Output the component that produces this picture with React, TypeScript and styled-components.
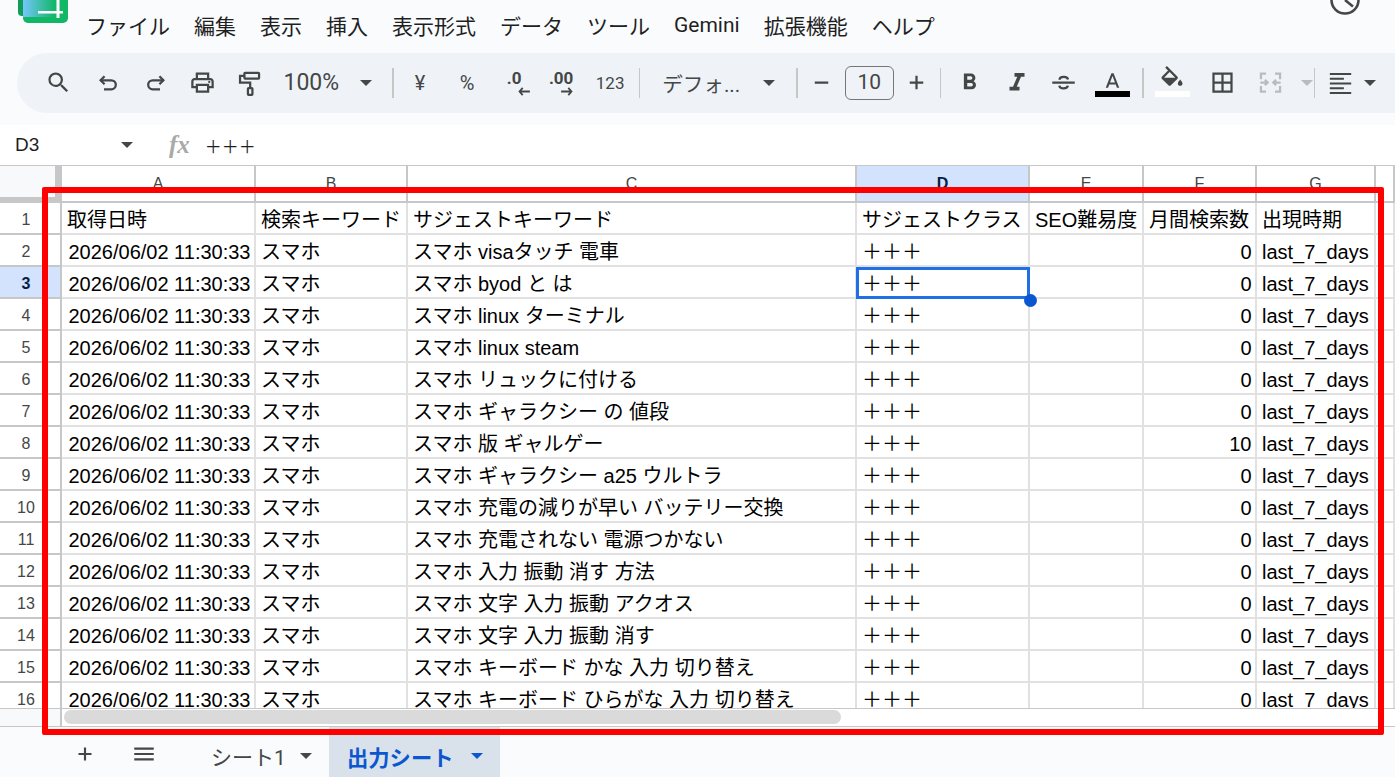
import * as React from 'react'
import styled, { createGlobalStyle } from 'styled-components'

const UI_FONT = '"Roboto", "Noto Sans CJK JP", sans-serif'
const CELL_FONT = '"Liberation Sans", "Noto Sans CJK JP", sans-serif'
const COLUMNS = '62px 194px 152px 449px 173px 114px 113px 119px 1fr'

const DATE = '2026/06/02 11:30:33'
const KEYWORDS: [string, string][] = [
  ['スマホ visaタッチ 電車', '0'],
  ['スマホ byod と は', '0'],
  ['スマホ linux ターミナル', '0'],
  ['スマホ linux steam', '0'],
  ['スマホ リュックに付ける', '0'],
  ['スマホ ギャラクシー の 値段', '0'],
  ['スマホ 版 ギャルゲー', '10'],
  ['スマホ ギャラクシー a25 ウルトラ', '0'],
  ['スマホ 充電の減りが早い バッテリー交換', '0'],
  ['スマホ 充電されない 電源つかない', '0'],
  ['スマホ 入力 振動 消す 方法', '0'],
  ['スマホ 文字 入力 振動 アクオス', '0'],
  ['スマホ 文字 入力 振動 消す', '0'],
  ['スマホ キーボード かな 入力 切り替え', '0'],
  ['スマホ キーボード ひらがな 入力 切り替え', '0']
]
const MENU = ['ファイル', '編集', '表示', '挿入', '表示形式', 'データ', 'ツール', 'Gemini', '拡張機能', 'ヘルプ']
const HEADERS = ['取得日時', '検索キーワード', 'サジェストキーワード', 'サジェストクラス', 'SEO難易度', '月間検索数', '出現時期']

const Icon = ({ d, size = 27, children }: { d?: string; size?: number; children?: React.ReactNode }) => (
  <svg width={size} height={size} viewBox="0 0 24 24" fill="currentColor">
    {d && <path d={d} />}
    {children}
  </svg>
)

const Stroke = styled.g`
  fill: none;
  stroke: currentColor;
  stroke-width: 2;
`

export default function App() {
  return (
    <Page>
      <GlobalStyle />
      <TopBar>
        <svg width="50" height="23" viewBox="0 0 50 23">
          <defs>
            <linearGradient id="logo" x1="0" x2="1" y1="0" y2="0">
              <stop offset="0" stopColor="#74c6fb" />
              <stop offset="0.7" stopColor="#12b76a" />
              <stop offset="1" stopColor="#0fb862" />
            </linearGradient>
          </defs>
          <path d="M0 0h6v16H4a4 4 0 0 1-4-4z" fill="#0f9d58" />
          <path d="M5 0h45v18a5 5 0 0 1-5 5H10a5 5 0 0 1-5-5z" fill="#10b765" />
          <path d="M5 0h45v17H5z" fill="url(#logo)" />
          <path d="M20 11h25v2.500H20zM38.500 0h3v18h-3z" fill="#fff" />
        </svg>
        <Menu>
          {MENU.map(m => (
            <MenuItem key={m}>{m}</MenuItem>
          ))}
        </Menu>
        <HistoryIcon width="32" height="15" viewBox="0 0 32 15">
          <circle cx="16" cy="0" r="13.5" fill="none" stroke="#444746" strokeWidth="2.6" />
          <path d="M16 0l8 6.5" fill="none" stroke="#444746" strokeWidth="2.6" />
        </HistoryIcon>
      </TopBar>

      <Toolbar>
        <ToolButton $mr={3}>
          <Icon d="M15.5 14h-.79l-.28-.27A6.471 6.471 0 0 0 16 9.5 6.5 6.5 0 1 0 9.5 16c1.61 0 3.09-.59 4.23-1.57l.27.28v.79l5 4.99L20.49 19l-4.99-5zm-6 0C7.01 14 5 11.99 5 9.5S7.01 5 9.5 5 14 7.01 14 9.5 11.99 14 9.5 14z" />
        </ToolButton>
        <ToolButton>
          <Icon>
            <Stroke>
              <path d="M8.5 6.5L5 10l3.5 3.5" />
              <path d="M5 10h9.5a4 4 0 0 1 0 8H8" />
            </Stroke>
          </Icon>
        </ToolButton>
        <ToolButton>
          <Icon>
            <Stroke>
              <path d="M15.5 6.5L19 10l-3.500 3.500" />
              <path d="M19 10H9.500a4 4 0 0 0 0 8H16" />
            </Stroke>
          </Icon>
        </ToolButton>
        <ToolButton>
          <Icon d="M19 8h-1V3H6v5H5c-1.66 0-3 1.34-3 3v6h4v4h12v-4h4v-6c0-1.66-1.34-3-3-3zM8 5h8v3H8V5zm8 12v2H8v-4h8v2zm2-2v-2H6v2H4v-4c0-.55.45-1 1-1h14c.55 0 1 .45 1 1v4h-2z">
            <circle cx="18" cy="11.5" r="1" />
          </Icon>
        </ToolButton>
        <ToolButton>
          <Icon>
            <Stroke>
              <rect x="7.5" y="3.5" width="13" height="5" rx="0.6" />
              <path d="M7.5 6H3.6v6.200h9v5" />
              <rect x="10.6" y="17" width="4" height="6" rx="0.6" />
            </Stroke>
          </Icon>
        </ToolButton>
        <ZoomLabel>100%</ZoomLabel>
        <Caret $ml={21} />
        <Divider $ml={20} $mr={3} />
        <ToolButton>
          <SymbolText>¥</SymbolText>
        </ToolButton>
        <ToolButton>
          <SymbolText>%</SymbolText>
        </ToolButton>
        <ToolButton>
          <DecimalIcon>
            <DecimalText>.0</DecimalText>
            <DecimalArrow $mr={-10} width="13" height="9" viewBox="0 0 14 10" fill="none" stroke="currentColor" strokeWidth="2">
              <path d="M5 1L1.500 5 5 9M2 5h11" />
            </DecimalArrow>
          </DecimalIcon>
        </ToolButton>
        <ToolButton>
          <DecimalIcon>
            <DecimalText>.00</DecimalText>
            <DecimalArrow $mr={0} width="13" height="9" viewBox="0 0 14 10" fill="none" stroke="currentColor" strokeWidth="2">
              <path d="M9 1l3.500 4L9 9M12 5H1" />
            </DecimalArrow>
          </DecimalIcon>
        </ToolButton>
        <ToolButton>
          <NumberText>123</NumberText>
        </ToolButton>
        <Divider $ml={7} $mr={22} />
        <FontLabel>デフォ...</FontLabel>
        <Caret $ml={23} />
        <Divider $ml={21} />
        <ToolButton>
          <Icon d="M6 11h12v2H6z" />
        </ToolButton>
        <SizeBox>10</SizeBox>
        <ToolButton $w={46}>
          <Icon d="M11 6h2v5h5v2h-5v5h-2v-5H6v-2h5z" />
        </ToolButton>
        <Divider $mr={5} />
        <ToolButton>
          <Icon d="M15.6 10.79c.97-.67 1.65-1.77 1.65-2.79 0-2.26-1.75-4-4-4H7v14h7.04c2.09 0 3.71-1.7 3.71-3.79 0-1.52-.86-2.82-2.15-3.42zM10 6.5h3c.83 0 1.5.67 1.5 1.5s-.67 1.5-1.5 1.5h-3v-3zm3.5 9H10v-3h3.5c.83 0 1.5.67 1.5 1.5s-.67 1.5-1.5 1.5z" />
        </ToolButton>
        <ToolButton>
          <Icon size={30} d="M10 4v3h2.21l-3.42 8H6v3h8v-3h-2.21l3.42-8H18V4z" />
        </ToolButton>
        <ToolButton>
          <Icon>
            <path d="M2 11h20v2H2z" />
            <Stroke>
              <path d="M8.500 9.500C8.500 6.500 15.500 6 16 9.300" />
              <path d="M8.300 14.800C8.800 18.300 15.500 18 15.800 14.800" />
            </Stroke>
          </Icon>
        </ToolButton>
        <ColorButton $pt={7} $ml={2}>
          <Icon size={25} d="M11 3L5.5 17h2.25l1.12-3h6.25l1.12 3h2.25L13 3h-2zm-1.38 9L12 5.67 14.38 12H9.62z" />
          <ColorBar $bar="#000000" $mt={-3.5} />
        </ColorButton>
        <Divider $ml={6} $mr={5} />
        <ColorButton $pt={3.5}>
          <Icon size={28} d="M16.56 8.94L7.62 0 6.21 1.41l2.38 2.38-5.15 5.15c-.59.59-.59 1.54 0 2.12l5.5 5.5c.29.29.68.44 1.06.44s.77-.15 1.06-.44l5.5-5.5c.59-.58.59-1.53 0-2.12zM5.21 10L10 5.21 14.79 10H5.21zM19 11.5s-2 2.17-2 3.5c0 1.1.9 2 2 2s2-.9 2-2c0-1.33-2-3.5-2-3.5z" />
          <ColorBar $bar="#ffffff" $mt={-3} />
        </ColorButton>
        <ToolButton $w={54}>
          <Icon d="M3 3v18h18V3H3zm8 16H5v-6h6v6zm0-8H5V5h6v6zm8 8h-6v-6h6v6zm0-8h-6V5h6v6z" />
        </ToolButton>
        <ToolButton $w={42} $disabled>
          <Icon>
            <Stroke>
              <path d="M8 4H3.500v5M3.500 15v5H8M16 4h4.500v5M20.500 15v5H16" />
              <path d="M3 12h6M7 9.500L9.500 12 7 14.500M21 12h-6M17 9.500L14.500 12l2.500 2.500" />
            </Stroke>
          </Icon>
        </ToolButton>
        <Caret $ml={9} $disabled />
        <Divider $ml={1} />
        <ToolButton $w={50}>
          <Icon d="M2.500 3.500h19v1.800h-19zM2.500 7.700H15v1.800H2.500zM2.500 12h19v1.800h-19zM2.500 16.200H15V18H2.500zM2.500 20.500h19v1.800h-19z" />
        </ToolButton>
        <Caret $ml={-1} />
      </Toolbar>

      <FormulaBar>
        <NameBox>D3</NameBox>
        <Caret $ml={0} />
        <FxLabel>fx</FxLabel>
        <FormulaText>＋＋＋</FormulaText>
      </FormulaBar>

      <ColumnHeaderRow>
        <Corner />
        {['A', 'B', 'C', 'D', 'E', 'F', 'G'].map(c => (
          <ColumnHead key={c} $active={c === 'D'}>
            {c}
          </ColumnHead>
        ))}
        <ColumnHead />
      </ColumnHeaderRow>

      <SheetBody>
        <SheetRow>
          <RowHead>1</RowHead>
          <Cell>{HEADERS[0]}</Cell>
          <Cell>{HEADERS[1]}</Cell>
          <Cell>{HEADERS[2]}</Cell>
          <Cell>{HEADERS[3]}</Cell>
          <Cell>{HEADERS[4]}</Cell>
          <Cell>{HEADERS[5]}</Cell>
          <Cell>{HEADERS[6]}</Cell>
          <Cell />
        </SheetRow>
        {KEYWORDS.map(([keyword, volume], i) => {
          const rowNo = i + 2
          const active = rowNo === 3
          return (
            <SheetRow key={rowNo}>
              <RowHead $active={active}>{rowNo}</RowHead>
              <Cell $right>{DATE}</Cell>
              <Cell>スマホ</Cell>
              <Cell>{keyword}</Cell>
              <Cell $selected={active}>
                ＋＋＋
                {active && (
                  <Selection>
                    <FillHandle />
                  </Selection>
                )}
              </Cell>
              <Cell />
              <Cell $right>{volume}</Cell>
              <Cell>last_7_days</Cell>
              <Cell />
            </SheetRow>
          )
        })}
      </SheetBody>

      <ScrollRow>
        <ScrollCorner />
        <ScrollTrack>
          <ScrollThumb />
        </ScrollTrack>
      </ScrollRow>

      <TabBar>
        <TabIcon $ml={61}>
          <Icon d="M11 6h2v5h5v2h-5v5h-2v-5H6v-2h5z" size={26} />
        </TabIcon>
        <TabIcon $ml={11}>
          <Icon d="M3 6h18v2H3zM3 11h18v2H3zM3 16h18v2H3z" size={26} />
        </TabIcon>
        <SheetTab>
          シート1
          <Caret $ml={14} />
        </SheetTab>
        <ActiveSheetTab>
          出力シート
          <TabCaret />
        </ActiveSheetTab>
      </TabBar>

      <RedFrame />
    </Page>
  )
}

const GlobalStyle = createGlobalStyle`
  html, body {
    margin: 0;
    padding: 0;
    background: #f9fbfd;
    overflow: hidden;
  }
  * {
    box-sizing: border-box;
  }
`

const Page = styled.div`
  position: relative;
  display: flex;
  flex-direction: column;
  width: 1395px;
  height: 777px;
  overflow: hidden;
  background: #f9fbfd;
  font-family: ${UI_FONT};
`

const TopBar = styled.header`
  display: flex;
  flex: none;
  align-items: flex-start;
  height: 53px;
  padding-left: 18px;
  color: #1f1f1f;
`

const Menu = styled.nav`
  display: flex;
  gap: 24px;
  height: 49px;
  margin-left: 18px;
  align-items: center;
`

const MenuItem = styled.span`
  font-size: 21px;
  white-space: nowrap;
`

const HistoryIcon = styled.svg`
  margin-left: auto;
  margin-right: 34px;
`

const Toolbar = styled.div`
  display: flex;
  flex: none;
  align-items: center;
  height: 60px;
  margin-left: 17px;
  padding-left: 17.5px;
  padding-bottom: 1px;
  background: #eff3f8;
  border-radius: 30px 0 0 30px;
  color: #444746;
  overflow: hidden;
`

const ToolButton = styled.div<{ $w?: number; $mr?: number; $disabled?: boolean }>`
  display: flex;
  flex: none;
  align-items: center;
  justify-content: center;
  width: ${p => p.$w ?? 47}px;
  margin-right: ${p => p.$mr ?? 0}px;
  color: ${p => (p.$disabled ? '#b9bcbf' : 'inherit')};
`

const ColorButton = styled(ToolButton)<{ $pt: number; $ml?: number }>`
  flex-direction: column;
  justify-content: flex-start;
  height: 40px;
  margin-left: ${p => p.$ml ?? 0}px;
  padding-top: ${p => p.$pt}px;
`

const ColorBar = styled.div<{ $bar: string; $mt: number }>`
  flex: none;
  width: 35px;
  height: 6px;
  margin-top: ${p => p.$mt}px;
  background: ${p => p.$bar};
`

const ZoomLabel = styled.span`
  flex: none;
  margin-left: 11px;
  font-size: 23px;
`

const Caret = styled.span<{ $ml?: number; $disabled?: boolean }>`
  flex: none;
  width: 0;
  height: 0;
  margin-left: ${p => p.$ml ?? 0}px;
  border-left: 6.5px solid transparent;
  border-right: 6.5px solid transparent;
  border-top: 6.5px solid ${p => (p.$disabled ? '#b9bcbf' : '#444746')};
`

const Divider = styled.span<{ $ml?: number; $mr?: number }>`
  flex: none;
  width: 1.5px;
  height: 30px;
  margin-left: ${p => p.$ml ?? 0}px;
  margin-right: ${p => p.$mr ?? 0}px;
  background: #c7c7c7;
`

const SymbolText = styled.span`
  font-size: 20px;
`

const DecimalIcon = styled.div`
  display: flex;
  flex-direction: column;
  align-items: flex-end;
`

const DecimalText = styled.span`
  font-size: 17px;
  font-weight: 700;
  line-height: 18px;
`

const DecimalArrow = styled.svg<{ $mr: number }>`
  margin-right: ${p => p.$mr}px;
`

const NumberText = styled.span`
  margin-left: 4px;
  font-size: 17px;
`

const FontLabel = styled.span`
  flex: none;
  font-size: 20.6px;
`

const SizeBox = styled.div`
  flex: none;
  width: 49px;
  height: 34px;
  border: 1.5px solid #747775;
  border-radius: 6px;
  font-size: 21px;
  line-height: 31px;
  text-align: center;
`

const FormulaBar = styled.div`
  display: flex;
  flex: none;
  align-items: center;
  height: 41px;
  margin-top: 12px;
  padding-left: 15px;
  background: #ffffff;
  border-bottom: 1.5px solid #c7c7c7;
  color: #1f1f1f;
  font-family: ${CELL_FONT};
`

const NameBox = styled.span`
  width: 106px;
  font-size: 19px;
`

const FxLabel = styled.span`
  margin-left: 36px;
  font-family: 'Liberation Serif', serif;
  font-size: 25px;
  font-style: italic;
  font-weight: 700;
  color: #a9a9a9;
`

const FormulaText = styled.span`
  margin-left: 15px;
  font-size: 17px;
`

const ColumnHeaderRow = styled.div`
  display: grid;
  flex: none;
  grid-template-columns: ${COLUMNS};
  height: 37px;
  background: #ffffff;
`

const Corner = styled.div`
  background: #f8f9fa;
  border-right: 7px solid #c7c7c7;
  border-bottom: 6px solid #c7c7c7;
`

const ColumnHead = styled.div<{ $active?: boolean }>`
  padding-top: 8px;
  border-right: 2px solid #c7c7c7;
  border-bottom: 2px solid #c7c7c7;
  background: ${p => (p.$active ? '#d3e3fd' : '#ffffff')};
  color: ${p => (p.$active ? '#041e49' : '#444746')};
  font-family: ${CELL_FONT};
  font-size: 16px;
  font-weight: ${p => (p.$active ? 700 : 400)};
  line-height: 20px;
  text-align: center;
`

const SheetBody = styled.div`
  flex: none;
  height: 505px;
  overflow: hidden;
  background: #ffffff;
`

const SheetRow = styled.div`
  display: grid;
  grid-template-columns: ${COLUMNS};
  grid-template-rows: 32px;
  height: 32px;
`

const RowHead = styled.div<{ $active?: boolean }>`
  padding-right: 8px;
  overflow: hidden;
  border-right: 2px solid #c7c7c7;
  border-bottom: 2px solid #c7c7c7;
  background: ${p => (p.$active ? '#d3e3fd' : '#ffffff')};
  color: ${p => (p.$active ? '#041e49' : '#444746')};
  font-family: ${CELL_FONT};
  font-size: 16px;
  font-weight: ${p => (p.$active ? 700 : 400)};
  line-height: 34px;
  text-align: center;
`

const Cell = styled.div<{ $right?: boolean; $selected?: boolean }>`
  position: relative;
  z-index: ${p => (p.$selected ? 2 : 'auto')};
  padding: 0 3.5px 0 5px;
  overflow: ${p => (p.$selected ? 'visible' : 'hidden')};
  border-right: 2px solid #e1e1e1;
  border-bottom: 2px solid #e1e1e1;
  color: #000000;
  font-family: ${CELL_FONT};
  font-size: 20px;
  line-height: 34px;
  text-align: ${p => (p.$right ? 'right' : 'left')};
  white-space: nowrap;
`

const Selection = styled.div`
  position: absolute;
  top: 0;
  right: -2px;
  bottom: -2px;
  left: -1px;
  border: 3px solid #1f6fe5;
`

const FillHandle = styled.div`
  position: absolute;
  right: -9.5px;
  bottom: -10.5px;
  width: 13px;
  height: 13px;
  border-radius: 50%;
  background: #0b57d0;
`

const ScrollRow = styled.div`
  display: flex;
  flex: none;
  height: 19px;
  border-top: 1.5px solid #c7c7c7;
  border-bottom: 1.5px solid #c7c7c7;
  background: #ffffff;
`

const ScrollCorner = styled.div`
  width: 62px;
  background: #f8f9fa;
  border-right: 2px solid #c7c7c7;
`

const ScrollTrack = styled.div`
  flex: 1;
  padding: 1px 0 0 2px;
`

const ScrollThumb = styled.div`
  width: 777px;
  height: 14px;
  border-radius: 7px;
  background: #dadada;
`

const TabBar = styled.footer`
  display: flex;
  flex: 1;
  align-items: center;
  color: #444746;
`

const TabIcon = styled.div<{ $ml: number }>`
  display: flex;
  width: 48px;
  justify-content: center;
  margin-left: ${p => p.$ml}px;
  padding-top: 4px;
`

const SheetTab = styled.div`
  display: flex;
  align-items: center;
  width: 128px;
  height: 100%;
  margin-left: 33px;
  padding: 8px 0 0 10px;
  font-size: 21px;
`

const ActiveSheetTab = styled.div`
  display: flex;
  align-items: center;
  width: 171px;
  height: 100%;
  padding: 8px 0 0 18px;
  background: #d9e1ea;
  color: #0b57d0;
  font-size: 21.3px;
  font-weight: 700;
`

const TabCaret = styled.span`
  width: 0;
  height: 0;
  margin-left: 17.5px;
  border-left: 6.5px solid transparent;
  border-right: 6.5px solid transparent;
  border-top: 6.5px solid #0b57d0;
`

const RedFrame = styled.div`
  position: absolute;
  top: 187px;
  left: 42px;
  width: 1342px;
  height: 548px;
  border: 6px solid #ff0000;
  border-radius: 2px;
  pointer-events: none;
`
